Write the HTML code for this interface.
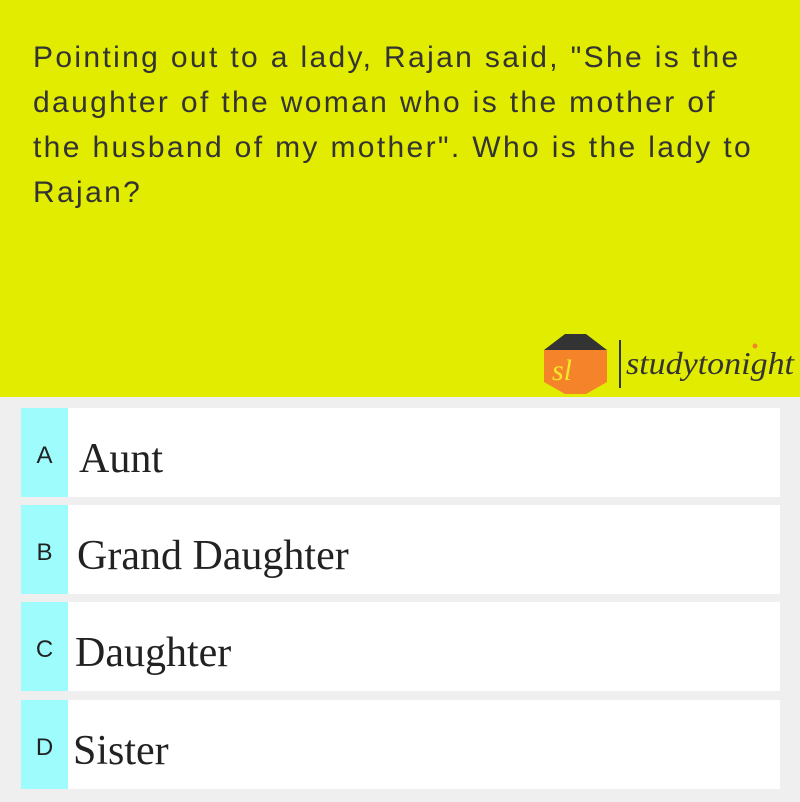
<!DOCTYPE html>
<html><head><style>
body{margin:0;width:800px;height:800px;background:#efefef;position:relative;overflow:hidden;font-family:"Liberation Sans",sans-serif}
.top{position:absolute;left:0;top:0;width:800px;height:397px;background:#e2ec00}
.q{position:absolute;left:33px;top:35px;white-space:nowrap;font-size:30px;line-height:45px;letter-spacing:2.35px;color:#333}
.row{position:absolute;left:21px;width:759px;height:89px;background:#fff}
.row .l{position:absolute;left:0;top:0;width:47px;height:100%;background:#9ffcfd;font-size:24px;color:#222;text-align:center;line-height:96px}
.row .t{position:absolute;left:58px;top:0;line-height:102px;font-family:"Liberation Serif",serif;font-size:42px;color:#222}
</style></head><body>
<div class="top">
<div class="q">Pointing out to a lady, Rajan said, "She is the<br>daughter of the woman who is the mother of<br>the husband of my mother". Who is the lady to<br>Rajan?</div>
<svg style="position:absolute;left:540px;top:332px" width="260" height="64" viewBox="0 0 260 64">
<path d="M4 18 L25 2 L46 2 L67 18 Z" fill="#333"/>
<path d="M4 18 L67 18 L67 50 L46 62 L25 62 L4 50 Z" fill="#f5832a"/>
<text x="12" y="48" font-family="Liberation Serif,serif" font-style="italic" font-size="30" fill="#f4e829">sl</text>
<rect x="79" y="8" width="2" height="48" fill="#333"/>
<text x="86" y="42" font-family="Liberation Serif,serif" font-style="italic" font-size="32" fill="#333" textLength="168" lengthAdjust="spacingAndGlyphs">studytonight</text>
<circle cx="215" cy="14" r="2.5" fill="#f5832a"/>
</svg>
</div>
<div class="row" style="top:408px"><div class="l">A</div><div class="t">Aunt</div></div>
<div class="row" style="top:505px"><div class="l">B</div><div class="t" style="left:56px">Grand Daughter</div></div>
<div class="row" style="top:602px"><div class="l">C</div><div class="t" style="left:54px">Daughter</div></div>
<div class="row" style="top:700px"><div class="l">D</div><div class="t" style="left:52px">Sister</div></div>
</body></html>
